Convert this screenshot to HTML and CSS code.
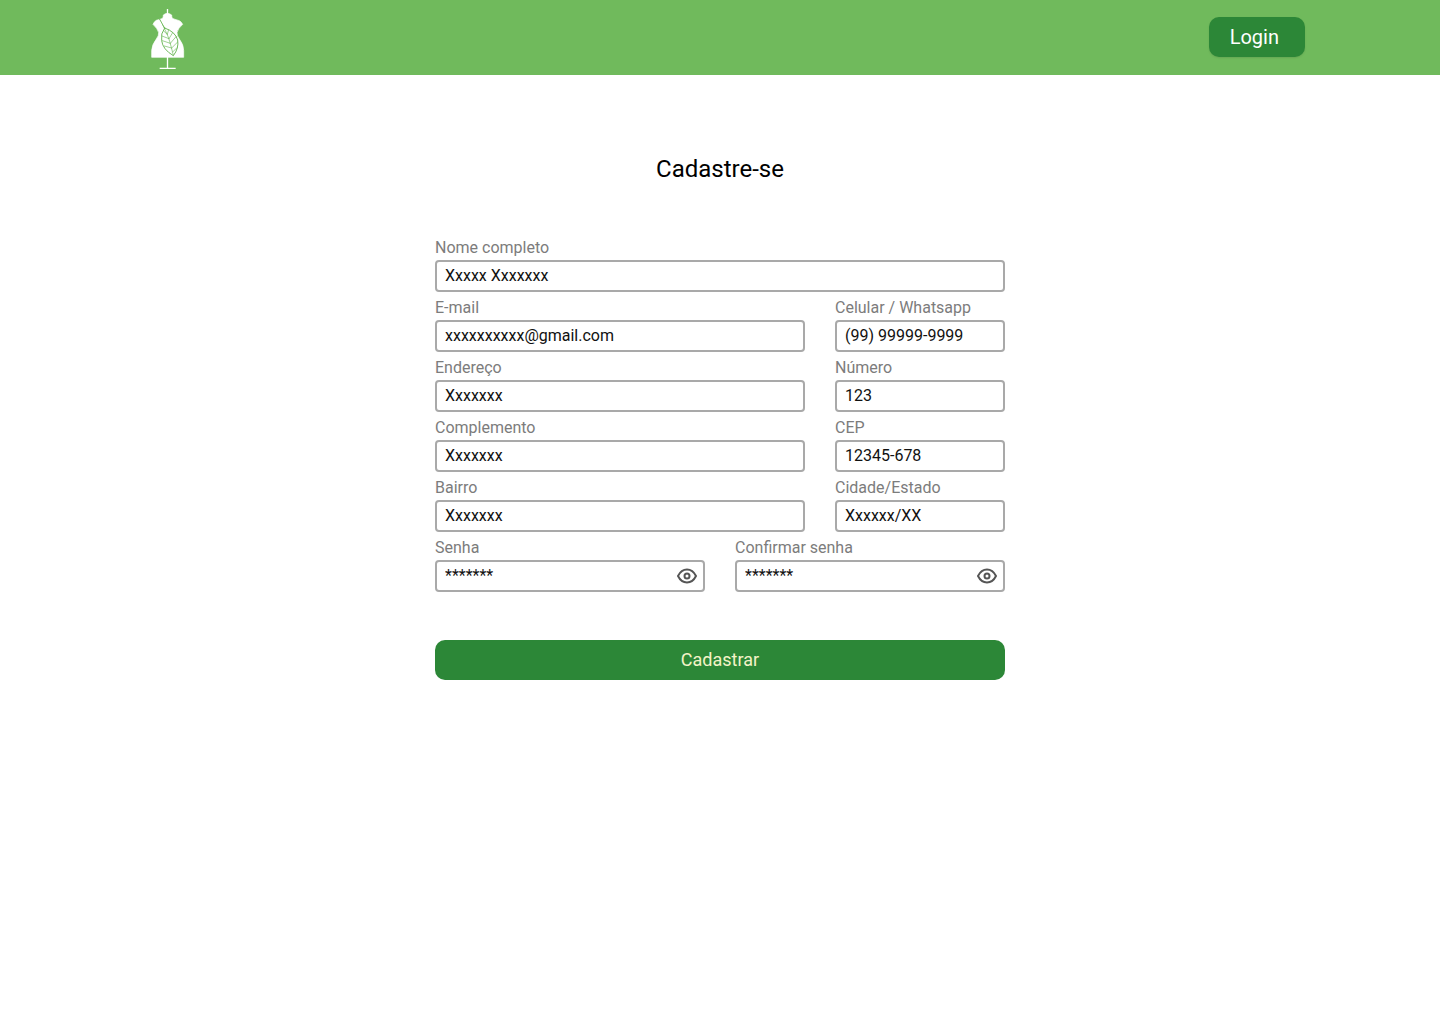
FILE: index.html
```html
<!DOCTYPE html>
<html lang="pt-BR">
<head>
  <meta charset="UTF-8" />
  <meta name="viewport" content="width=device-width, initial-scale=1.0" />
  <title>Cadastre-se</title>
  <link rel="stylesheet" href="styles.css">
</head>
<body>
  <header class="header">
    <a class="logo" href="#" aria-label="Início">
      <svg viewBox="30 24 108 186" width="36" height="62" fill="none">
        <path d="M82.500 27V46M82.500 170V204M59 205H107" stroke="#fff" stroke-width="4"/>
        <path d="M70 45Q82 35 95 45Q94 53 99 56L118 62Q123 64 128 73Q113 86 111 98Q110 106 118 117Q131 134 131 151V172H35V151Q36 134 49 117Q57 106 56 98Q53 86 39 73Q43 64 49 61L66 56Q71 53 70 45Z" fill="#fff" stroke="#fff" stroke-width="2"/>
        <g stroke="#70ba5c" stroke-width="3" stroke-linecap="round">
          <path d="M69 76Q74 88 81 102T100 166" stroke-width="2"/>
          <path d="M59 58Q64 66 69 76L74 84"/>
          <path d="M74 84Q61 101 65 122Q68 148 100 167Q117 145 113 120Q106 95 74 84Z"/>
          <path d="M82 103L72 94M87 116L66 108M91 130L67 122M95 144L73 138M82 103L86 89M87 116L98 98M91 130L109 109M95 144L113 126M98 156L111 143" stroke-width="2"/>
        </g>
      </svg>
    </a>
    <button class="login" type="button">Login</button>
  </header>

  <main class="container">
    <h1>Cadastre-se</h1>

    <form class="form">
      <div class="field">
        <label for="nome">Nome completo</label>
        <input id="nome" type="text" value="Xxxxx Xxxxxxx">
      </div>

      <div class="row">
        <div class="field">
          <label for="email">E-mail</label>
          <input id="email" type="email" value="xxxxxxxxxx@gmail.com">
        </div>
        <div class="field">
          <label for="celular">Celular / Whatsapp</label>
          <input id="celular" type="tel" value="(99) 99999-9999">
        </div>
      </div>

      <div class="row">
        <div class="field">
          <label for="endereco">Endereço</label>
          <input id="endereco" type="text" value="Xxxxxxx">
        </div>
        <div class="field">
          <label for="numero">Número</label>
          <input id="numero" type="text" value="123">
        </div>
      </div>

      <div class="row">
        <div class="field">
          <label for="complemento">Complemento</label>
          <input id="complemento" type="text" value="Xxxxxxx">
        </div>
        <div class="field">
          <label for="cep">CEP</label>
          <input id="cep" type="text" value="12345-678">
        </div>
      </div>

      <div class="row">
        <div class="field">
          <label for="bairro">Bairro</label>
          <input id="bairro" type="text" value="Xxxxxxx">
        </div>
        <div class="field">
          <label for="cidade">Cidade/Estado</label>
          <input id="cidade" type="text" value="Xxxxxx/XX">
        </div>
      </div>

      <div class="row senhas">
        <div class="field">
          <label for="senha">Senha</label>
          <div class="senha">
            <input id="senha" type="text" value="*******" autocomplete="off">
            <button class="olho" type="button" aria-label="Mostrar senha">
              <svg viewBox="0 0 24 24" width="24" height="24" fill="none" stroke="#555" stroke-width="2">
                <path d="M3 12C5 8 8 5.500 12 5.500S19 8 21 12C19 16 16 18.500 12 18.500S5 16 3 12Z" stroke-linejoin="round"/>
                <circle cx="12" cy="12" r="2.500"/>
              </svg>
            </button>
          </div>
        </div>
        <div class="field">
          <label for="confirmar">Confirmar senha</label>
          <div class="senha">
            <input id="confirmar" type="text" value="*******" autocomplete="off">
            <button class="olho" type="button" aria-label="Mostrar senha">
              <svg viewBox="0 0 24 24" width="24" height="24" fill="none" stroke="#555" stroke-width="2">
                <path d="M3 12C5 8 8 5.500 12 5.500S19 8 21 12C19 16 16 18.500 12 18.500S5 16 3 12Z" stroke-linejoin="round"/>
                <circle cx="12" cy="12" r="2.500"/>
              </svg>
            </button>
          </div>
        </div>
      </div>

      <button class="cadastrar" type="submit">Cadastrar</button>
    </form>
  </main>
</body>
</html>
```
FILE: styles.css
```css
* {
  margin: 0;
  padding: 0;
  box-sizing: border-box;
}

body {
  background: #fff;
  font-family: Roboto, sans-serif;
  font-size: 16px;
  color: #000;
}

button, input {
  font-family: inherit;
}

.header {
  display: flex;
  align-items: center;
  justify-content: space-between;
  height: 75px;
  padding: 0 135px 1px 150px;
  background: #70ba5c;
}

.logo svg {
  display: block;
  margin-top: 4px;
}

.login {
  height: 40px;
  padding: 0 26px 0 21px;
  border: none;
  border-radius: 10px;
  background: #2c8737;
  box-shadow: 0 1px 2px rgba(0, 0, 0, 0.1);
  color: #fff;
  font-size: 20px;
  cursor: pointer;
}

.container {
  max-width: 602px;
  margin: 0 auto;
  padding: 78px 16px 32px;
}

h1 {
  font-size: 24px;
  font-weight: 400;
  line-height: 32px;
  text-align: center;
}

.form {
  display: flex;
  flex-direction: column;
  gap: 4px;
  margin-top: 51px;
}

.row {
  display: grid;
  grid-template-columns: 1fr 170px;
  gap: 30px;
}

.senhas {
  grid-template-columns: 1fr 1fr;
}

.field label {
  display: block;
  color: #7c7c7c;
  line-height: 24px;
}

.field input {
  display: block;
  width: 100%;
  height: 32px;
  padding: 0 8px 2px;
  border: 2px solid #a9a9a9;
  border-radius: 4px;
  background: #fff;
  color: #111;
  font-size: 16px;
}

.senha {
  position: relative;
}

.senha input {
  padding-right: 36px;
}

/* ícone por cima do campo */
.olho {
  position: absolute;
  top: 4px;
  right: 6px;
  width: 24px;
  height: 24px;
  border: none;
  background: none;
  cursor: pointer;
}

.olho svg {
  display: block;
}

.cadastrar {
  height: 40px;
  margin-top: 44px;
  padding-bottom: 2px;
  border: none;
  border-radius: 10px;
  background: #2c8737;
  color: #f3f3c8;
  font-size: 18px;
  cursor: pointer;
}
```
